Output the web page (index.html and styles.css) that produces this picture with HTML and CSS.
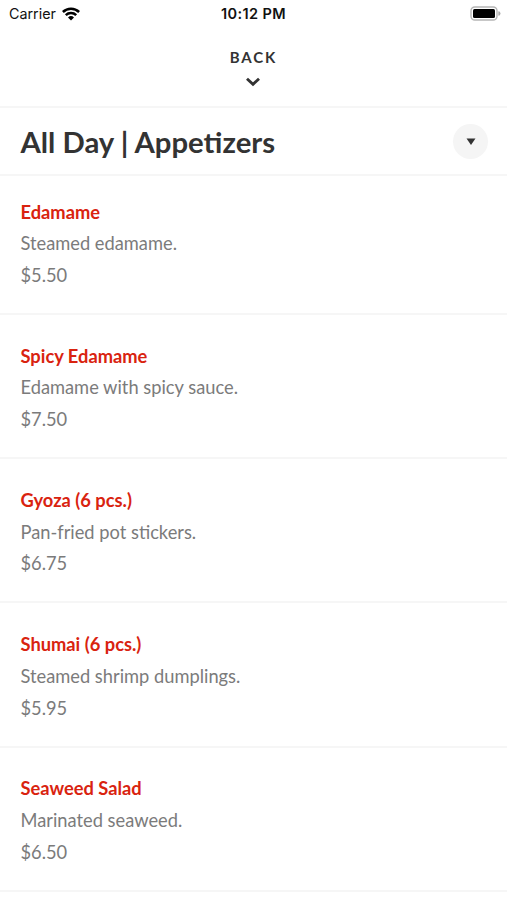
FILE: index.html
```html
<!DOCTYPE html>
<html lang="en">
<head>
<meta charset="utf-8">
<title>Appetizers</title>
<link rel="stylesheet" href="styles.css">
</head>
<body>
<div class="status">
  <div class="carrier"><span>Carrier</span>
    <svg class="wifi" viewBox="0 0 18 14" width="18" height="14"><g fill="none" stroke="#000" stroke-width="2.5"><path d="M.9 5A11.5 11.5 0 0 1 17.1 5"/><path d="M3.8 8.2A7.4 7.4 0 0 1 14.2 8.2"/></g><path d="M9 13.5L6 10.4A4.4 4.4 0 0 1 12 10.4Z"/></svg>
  </div>
  <div class="time">10:12 PM</div>
  <svg class="battery" viewBox="0 0 32 15" width="32" height="15"><rect x="2" y="1" width="26" height="13" rx="3.8" fill="#fff" stroke="#b5b5b5" stroke-width="1.4"/><rect x="4" y="3" width="22" height="9" rx="1.5"/><path d="M29.3 5.3a2.2 2.2 0 0 1 0 4.4z" fill="#aaa"/></svg>
</div>
<header class="back"><span>BACK</span>
  <svg viewBox="0 0 14 10" width="14" height="10"><path d="M1 1.8L7 7.3L13 1.8" fill="none" stroke="#333" stroke-width="2.9"/></svg>
</header>
<div class="category"><h1>All Day | Appetizers</h1>
  <button class="drop" aria-label="Choose category"><svg viewBox="0 0 10 7" width="10" height="7"><path d="M.5 .5h9L5 7z" fill="#333"/></svg></button>
</div>
<main>
  <article class="item"><h2>Edamame</h2><p>Steamed edamame.</p><p>$5.50</p></article>
  <article class="item"><h2>Spicy Edamame</h2><p>Edamame with spicy sauce.</p><p>$7.50</p></article>
  <article class="item"><h2>Gyoza (6 pcs.)</h2><p>Pan-fried pot stickers.</p><p>$6.75</p></article>
  <article class="item"><h2>Shumai (6 pcs.)</h2><p>Steamed shrimp dumplings.</p><p>$5.95</p></article>
  <article class="item"><h2>Seaweed Salad</h2><p>Marinated seaweed.</p><p>$6.50</p></article>
</main>
</body>
</html>
```
FILE: styles.css
```css
* { box-sizing: border-box; margin: 0; padding: 0; }
body { height: 900px; overflow: hidden; background: #fff; font-family: Lato, sans-serif; color: #333; }
.status { display: grid; grid-template-columns: 1fr auto 1fr; align-items: center; height: 27px; padding: 0 6px 0 9px; font-family: Inter, sans-serif; font-size: 14.3px; color: #111; }
.carrier { display: flex; align-items: center; gap: 6px; }
.time { margin-right: 3px; font-size: 14.5px; font-weight: 600; letter-spacing: .4px; }
.battery { justify-self: end; margin-top: -1px; }
.back { display: flex; flex-direction: column; align-items: center; height: 81px; padding-top: 20px; border-bottom: 2px solid #f6f6f6; font-size: 15px; font-weight: 700; line-height: 20px; letter-spacing: 1.9px; }
.back svg { margin: 10px 1px 0 0; }
.category { display: flex; align-items: center; justify-content: space-between; height: 68px; padding: 0 19px 0 20.5px; border-bottom: 2px solid #f6f6f6; }
h1 { font-size: 29.3px; font-weight: 700; }
.drop { display: flex; align-items: center; justify-content: center; width: 35px; height: 35px; border: 0; border-radius: 50%; background: #f5f5f5; }
.item { height: 144.2px; padding: 25.6px 20.5px 0; border-bottom: 2px solid #f6f6f6; font-size: 18.3px; line-height: 31.8px; color: #7b7b7b; }
.item:first-child { height: 139px; padding-top: 20.5px; }
h2 { font-size: 18.3px; font-weight: 700; color: #d9230f; }
```
